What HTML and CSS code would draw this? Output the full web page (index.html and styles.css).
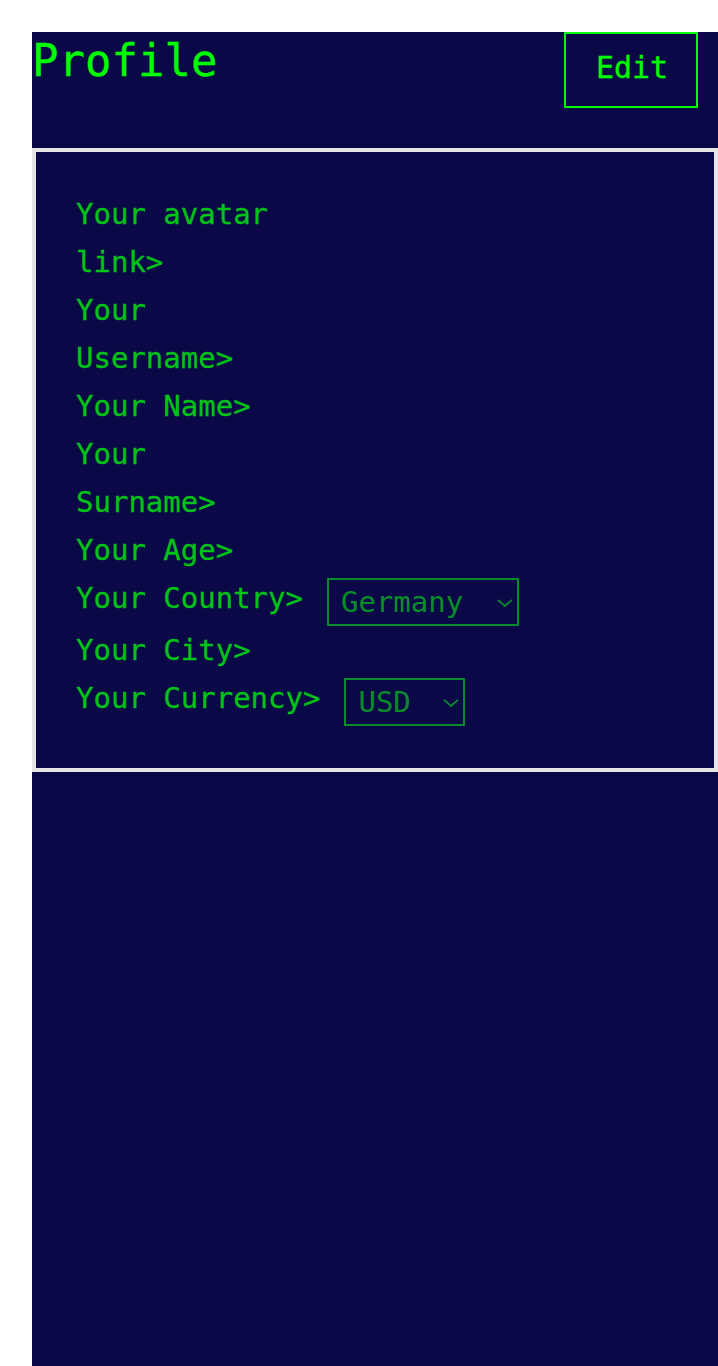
FILE: index.html
```html
<!DOCTYPE html>
<html lang="en">
<head>
<meta charset="utf-8">
<title>Profile</title>
<link rel="stylesheet" href="styles.css">
</head>
<body>
<div class="page">
  <header class="header">
    <h1 class="title">Profile</h1>
    <button class="edit" type="button">Edit</button>
  </header>
  <section class="card">
    <div class="row"><span class="label narrow">Your avatar link&gt;</span></div>
    <div class="row"><span class="label narrow">Your Username&gt;</span></div>
    <div class="row"><span class="label narrow">Your Name&gt;</span></div>
    <div class="row"><span class="label narrow">Your Surname&gt;</span></div>
    <div class="row"><span class="label narrow">Your Age&gt;</span></div>
    <div class="row">
      <span class="label">Your Country&gt;</span>
      <span class="select-wrap country">
        <select class="select"><option>Germany</option></select>
        <svg class="chevron" viewBox="0 0 16 8" width="16" height="8"><path d="M1 0.8 L8 7 L15 0.8" fill="none" stroke="currentColor" stroke-width="1.8"/></svg>
      </span>
    </div>
    <div class="row"><span class="label narrow">Your City&gt;</span></div>
    <div class="row">
      <span class="label">Your Currency&gt;</span>
      <span class="select-wrap currency">
        <select class="select"><option>USD</option></select>
        <svg class="chevron" viewBox="0 0 16 8" width="16" height="8"><path d="M1 0.8 L8 7 L15 0.8" fill="none" stroke="currentColor" stroke-width="1.8"/></svg>
      </span>
    </div>
  </section>
</div>
</body>
</html>
```

FILE: styles.css
```css
html, body {
  margin: 0;
  padding: 0;
  background: #ffffff;
}

body {
  font-family: "DejaVu Sans Mono", "Liberation Mono", monospace;
}

.page {
  margin: 32px 0 0 32px;
  width: 686px;
  min-height: calc(100vh - 32px);
  background: #0a0846;
}

.header {
  display: flex;
  justify-content: space-between;
  align-items: flex-start;
  height: 116px;
  padding-right: 20px;
  box-sizing: border-box;
}

.title {
  margin: 0;
  padding-top: 3px;
  font-size: 44px;
  font-weight: normal;
  line-height: normal;
  color: #00ff00;
  -webkit-text-stroke: 0.3px #00ff00;
}

.edit {
  width: 134px;
  height: 76px;
  background: transparent;
  border: 2px solid #00ff00;
  color: #00ff00;
  font-family: "DejaVu Sans Mono", "Liberation Mono", monospace;
  font-size: 30px;
  padding: 0 0 6px 2px;
  margin: 0;
  -webkit-text-stroke: 0.3px #00ff00;
}

.card {
  border: 4px solid #e6e6e6;
  padding: 38px 40px 42px;
  display: flex;
  flex-direction: column;
}

.row {
  display: flex;
  align-items: flex-start;
  gap: 24px;
}

.label {
  font-size: 29px;
  line-height: 48px;
  color: #00c317;
  -webkit-text-stroke: 0.3px #00c317;
}

.label.narrow {
  max-width: 200px;
}

.select-wrap {
  position: relative;
  display: block;
  margin-top: 4px;
  height: 48px;
  color: #088c2a;
}

.select-wrap.country { width: 192px; }
.select-wrap.currency { width: 121px; }

.select {
  -webkit-appearance: none;
  appearance: none;
  display: block;
  width: 100%;
  height: 48px;
  box-sizing: border-box;
  margin: 0;
  border: 2px solid #088c2a;
  border-radius: 0;
  background: transparent;
  color: #088c2a;
  font-family: "DejaVu Sans Mono", "Liberation Mono", monospace;
  font-size: 29px;
  padding: 0 0 0 12px;
  outline: none;
}

.chevron {
  position: absolute;
  right: 6px;
  top: 21px;
  pointer-events: none;
}
```
